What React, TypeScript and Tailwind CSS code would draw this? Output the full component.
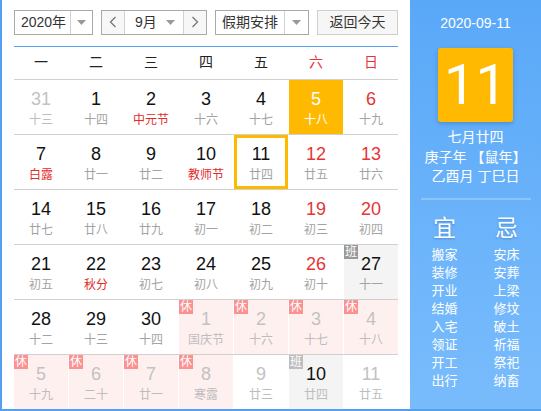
import React from 'react';

type Day = {
  n: number;
  sub: string;
  out?: boolean;
  weekend?: boolean;
  fest?: boolean;
  badge?: '休' | '班';
  selected?: boolean;
  today?: boolean;
};

const rows: Day[][] = [
  [
    { n: 31, sub: '十三', out: true },
    { n: 1, sub: '十四' },
    { n: 2, sub: '中元节', fest: true },
    { n: 3, sub: '十六' },
    { n: 4, sub: '十七' },
    { n: 5, sub: '十八', weekend: true, selected: true },
    { n: 6, sub: '十九', weekend: true },
  ],
  [
    { n: 7, sub: '白露', fest: true },
    { n: 8, sub: '廿一' },
    { n: 9, sub: '廿二' },
    { n: 10, sub: '教师节', fest: true },
    { n: 11, sub: '廿四', today: true },
    { n: 12, sub: '廿五', weekend: true },
    { n: 13, sub: '廿六', weekend: true },
  ],
  [
    { n: 14, sub: '廿七' },
    { n: 15, sub: '廿八' },
    { n: 16, sub: '廿九' },
    { n: 17, sub: '初一' },
    { n: 18, sub: '初二' },
    { n: 19, sub: '初三', weekend: true },
    { n: 20, sub: '初四', weekend: true },
  ],
  [
    { n: 21, sub: '初五' },
    { n: 22, sub: '秋分', fest: true },
    { n: 23, sub: '初七' },
    { n: 24, sub: '初八' },
    { n: 25, sub: '初九' },
    { n: 26, sub: '初十', weekend: true },
    { n: 27, sub: '十一', badge: '班' },
  ],
  [
    { n: 28, sub: '十二' },
    { n: 29, sub: '十三' },
    { n: 30, sub: '十四' },
    { n: 1, sub: '国庆节', out: true, badge: '休' },
    { n: 2, sub: '十六', out: true, badge: '休' },
    { n: 3, sub: '十七', out: true, badge: '休' },
    { n: 4, sub: '十八', out: true, badge: '休' },
  ],
  [
    { n: 5, sub: '十九', out: true, badge: '休' },
    { n: 6, sub: '二十', out: true, badge: '休' },
    { n: 7, sub: '廿一', out: true, badge: '休' },
    { n: 8, sub: '寒露', out: true, badge: '休' },
    { n: 9, sub: '廿三', out: true },
    { n: 10, sub: '廿四', out: true, badge: '班' },
    { n: 11, sub: '廿五', out: true },
  ],
];

const yi = ['搬家', '装修', '开业', '结婚', '入宅', '领证', '开工', '出行'];
const ji = ['安床', '安葬', '上梁', '修坟', '破土', '祈福', '祭祀', '纳畜'];

function Caret() {
  return (
    <svg width="9" height="5" viewBox="0 0 9 5">
      <path d="M0 0h9L4.5 5z" fill="#999" />
    </svg>
  );
}

function Cell({ d }: { d: Day }) {
  let bg = 'bg-white';
  if (d.selected) bg = 'bg-[#ffb900]';
  else if (d.badge === '休') bg = 'bg-[#fff0f0]';
  else if (d.badge === '班') bg = 'bg-[#f4f4f4]';

  let numColor = 'text-[#111]';
  if (d.selected) numColor = 'text-white';
  else if (d.badge === '班') numColor = 'text-[#111]';
  else if (d.out) numColor = 'text-[#c2c2c2]';
  else if (d.weekend) numColor = 'text-[#e53535]';

  let subColor = 'text-[#a3a3a3]';
  if (d.selected) subColor = 'text-white';
  else if (d.out) subColor = 'text-[#bdbdbd]';
  else if (d.fest) subColor = 'text-[#e52a2a]';

  return (
    <div
      className={`relative flex h-[54px] flex-col items-center ${bg} ${
        d.today ? 'border-[3px] border-[#ffb900] pt-[6px]' : 'pt-[9px]'
      }`}
    >
      {d.badge && (
        <span
          className={`absolute left-0 top-0 flex h-[14px] w-[14px] items-center justify-center text-[12px] leading-none text-white ${
            d.badge === '休' ? 'bg-[#fb9191]' : d.out ? 'bg-[#bdbdbd]' : 'bg-[#999]'
          }`}
        >
          {d.badge}
        </span>
      )}
      <span className={`text-[18px] leading-[20px] ${numColor}`}>{d.n}</span>
      <span className={`mt-[3px] text-[12px] leading-[16px] ${subColor}`}>{d.sub}</span>
    </div>
  );
}

export default function App() {
  return (
    <div
      className="flex h-[411px] w-[541px] overflow-hidden border-b-2 border-l-2 border-[#559ff0] bg-white"
      style={{ fontFamily: '"Liberation Sans", "Noto Sans CJK SC", sans-serif' }}
    >
      <div className="flex w-[408px] shrink-0 flex-col px-[12px] pt-[10px]">
        {/* toolbar */}
        <div className="flex h-[25px] items-stretch text-[14px] text-[#333]">
          <div className="flex w-[79px] border border-[#a9a9a9]">
            <div className="flex flex-1 items-center justify-center pl-[2px]">2020年</div>
            <div className="flex w-[22px] items-center justify-center border-l border-[#d2d2d2]">
              <Caret />
            </div>
          </div>
          <div className="ml-[8px] flex w-[106px] border border-[#a9a9a9]">
            <div className="flex w-[22px] items-center justify-center bg-[#f7f7f7]">
              <svg width="8" height="12" viewBox="0 0 8 12">
                <path d="M6.5 1L1.5 6l5 5" fill="none" stroke="#777" strokeWidth="1.3" />
              </svg>
            </div>
            <div className="flex flex-1 items-center justify-between border-x border-[#d2d2d2] pl-[10px] pr-[8px]">
              <span>9月</span>
              <Caret />
            </div>
            <div className="flex w-[22px] items-center justify-center bg-[#f7f7f7]">
              <svg width="8" height="12" viewBox="0 0 8 12">
                <path d="M1.5 1l5 5-5 5" fill="none" stroke="#777" strokeWidth="1.3" />
              </svg>
            </div>
          </div>
          <div className="ml-[8px] flex w-[94px] border border-[#a9a9a9]">
            <div className="flex flex-1 items-center justify-center">假期安排</div>
            <div className="flex w-[24px] items-center justify-center border-l border-[#d2d2d2]">
              <Caret />
            </div>
          </div>
          <div className="ml-[8px] flex w-[81px] items-center justify-center border border-[#cfcfcf] bg-[#f6f6f6]">
            返回今天
          </div>
        </div>

        <div className="mt-[11px] h-px bg-[#55a2f2]" />

        {/* week header */}
        <div className="grid h-[33px] grid-cols-7 items-center gap-x-px text-center text-[14px] text-[#222]">
          {['一', '二', '三', '四', '五'].map((w) => (
            <span key={w}>{w}</span>
          ))}
          <span className="text-[#e53535]">六</span>
          <span className="text-[#e53535]">日</span>
        </div>

        {/* days */}
        <div className="flex flex-col">
          {rows.map((r, i) => (
            <div key={i} className="grid grid-cols-7 gap-x-px border-t border-[#d0d0d0]">
              {r.map((d, j) => (
                <Cell key={j} d={d} />
              ))}
            </div>
          ))}
        </div>
      </div>

      {/* side panel */}
      <div className="flex flex-1 flex-col items-center bg-gradient-to-b from-[#59a8f8] to-[#79bcfc] text-white">
        <div className="mt-[15px] text-[14px] leading-[16px]">2020-09-11</div>
        <div
          className="mt-[17px] flex h-[74px] w-[75px] items-center justify-center rounded-[3px] bg-[#ffb900] text-[56px] font-normal leading-none shadow-[0_2px_4px_rgba(0,60,140,0.25)]"
          style={{ fontFamily: 'Roboto, "Liberation Sans", sans-serif' }}
        >
          11
        </div>
        <div className="mt-[6px] flex flex-col items-center text-[14px] leading-[19.5px]">
          <span>七月廿四</span>
          <span>庚子年 【鼠年】</span>
          <span>乙酉月 丁巳日</span>
        </div>
        <div className="mt-[11px] h-[2px] w-[110px] bg-[#8ec6fb]" />
        <div className="mt-[14px] flex w-[110px] justify-between px-[4px]">
          <div className="flex w-[40px] flex-col items-center">
            <span className="text-[23px] leading-[28px] [text-shadow:0_1px_2px_rgba(0,60,140,0.35)]">宜</span>
            <div className="mt-[4px] flex flex-col items-center text-[13px] leading-[18px]">
              {yi.map((t) => (
                <span key={t}>{t}</span>
              ))}
            </div>
          </div>
          <div className="flex w-[40px] flex-col items-center">
            <span className="text-[23px] leading-[28px] [text-shadow:0_1px_2px_rgba(0,60,140,0.35)]">忌</span>
            <div className="mt-[4px] flex flex-col items-center text-[13px] leading-[18px]">
              {ji.map((t) => (
                <span key={t}>{t}</span>
              ))}
            </div>
          </div>
        </div>
      </div>
    </div>
  );
}
